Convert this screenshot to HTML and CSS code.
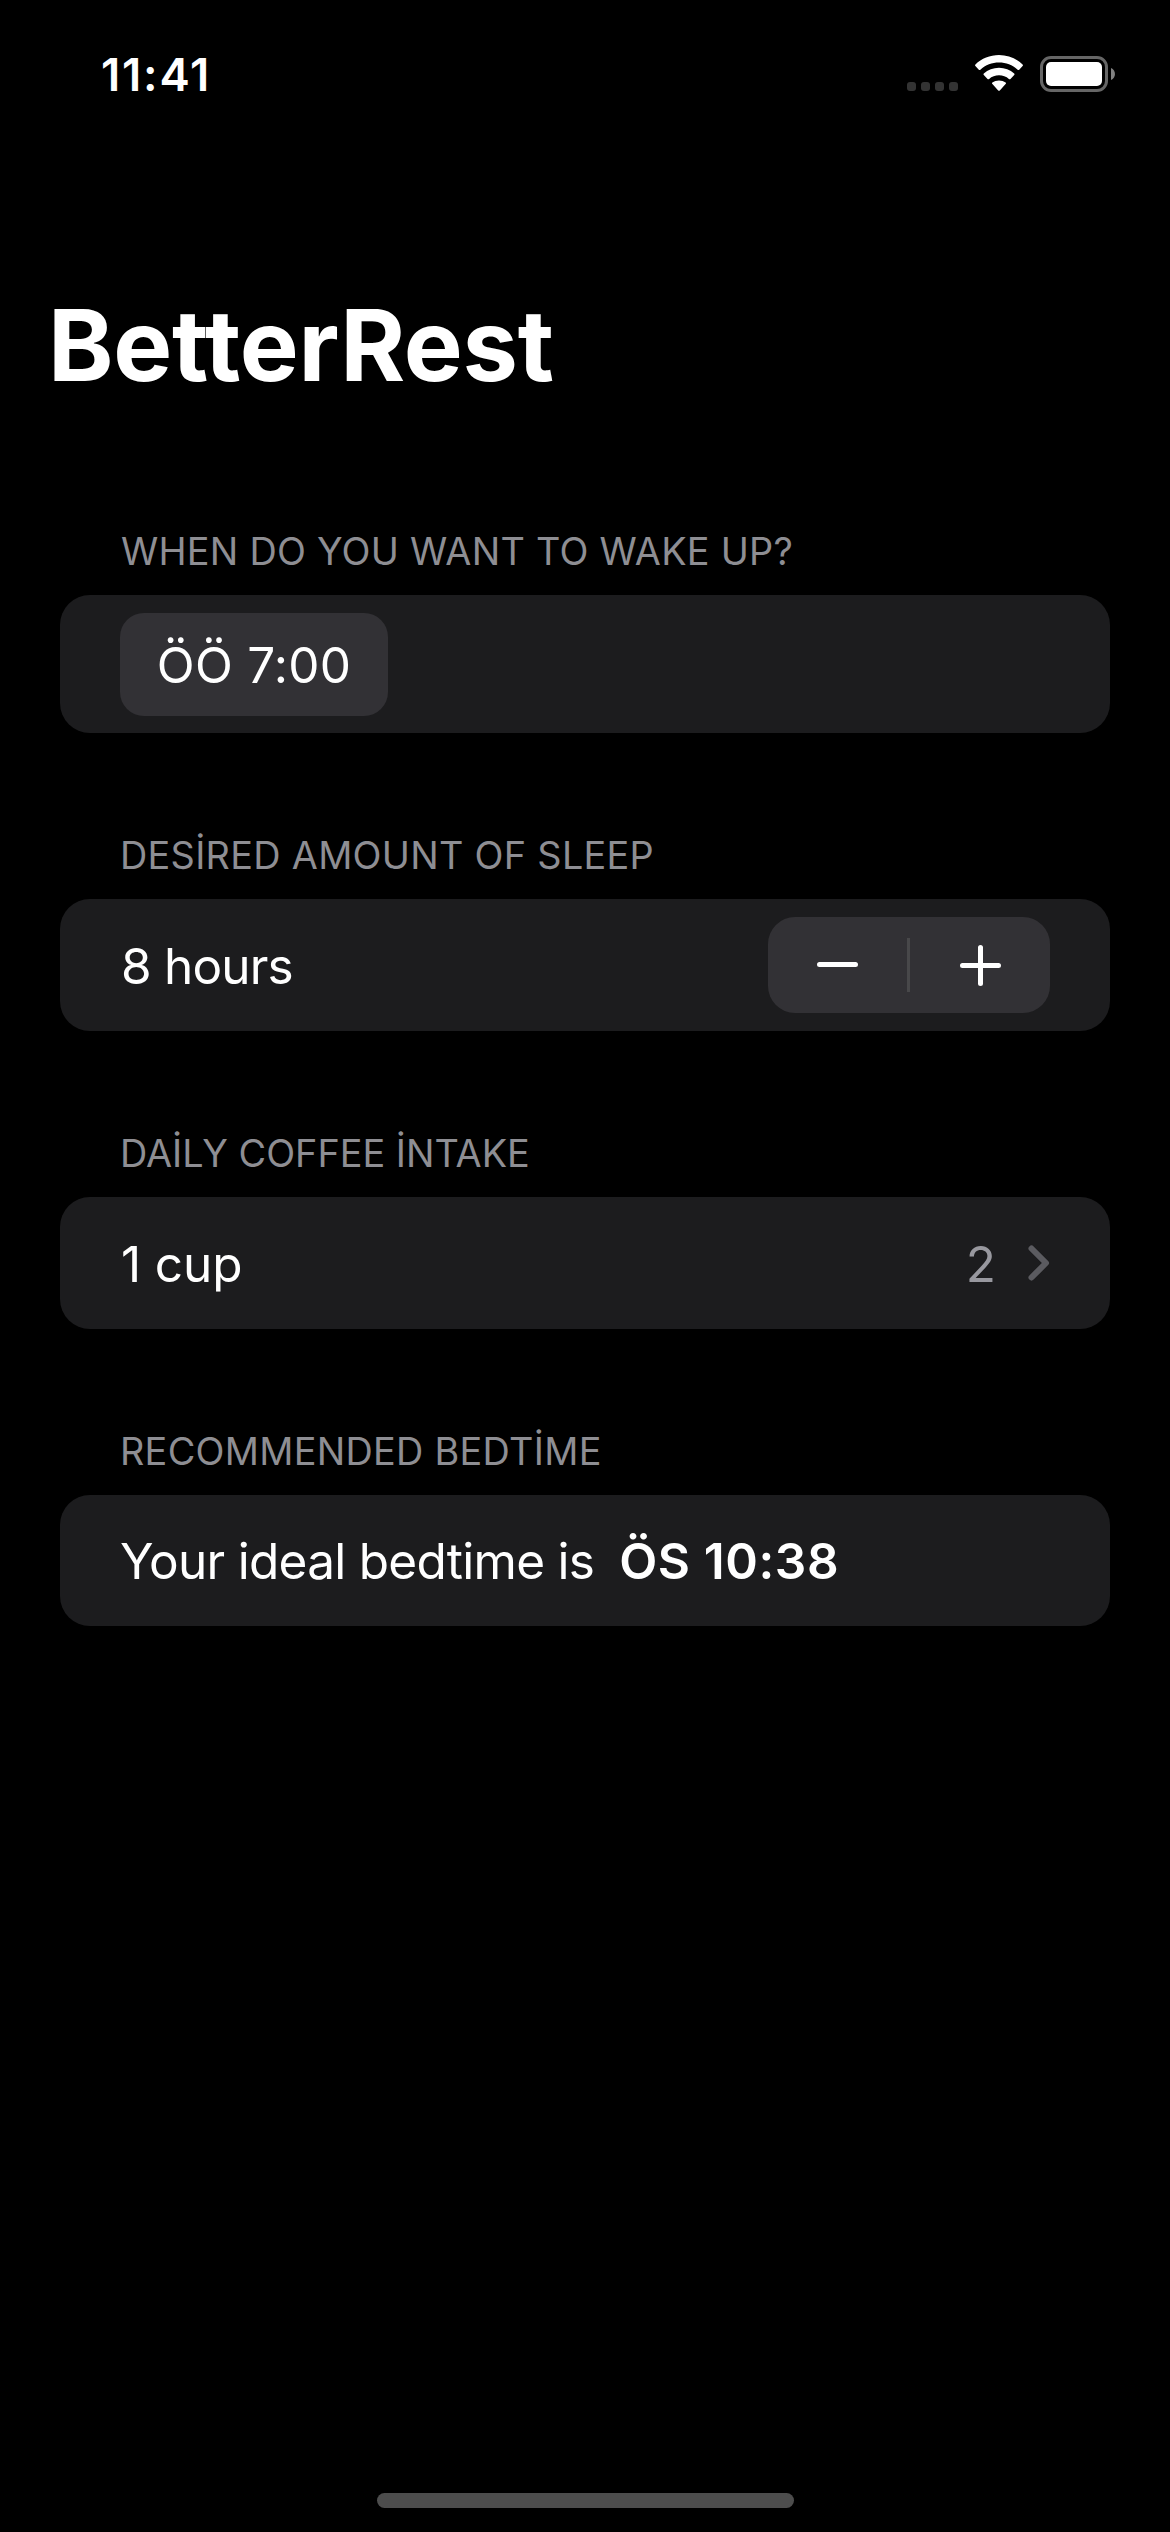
FILE: index.html
```html
<!DOCTYPE html>
<html lang="en">
<head>
<meta charset="utf-8">
<title>BetterRest</title>
<link rel="stylesheet" href="styles.css">
</head>
<body>
<div class="screen">
  <header class="status">
    <span class="time">11:41</span>
    <div class="indicators">
      <svg class="signal" width="51" height="9" viewBox="0 0 51 9"><g fill="#333"><rect width="9" height="9" rx="3"/><rect x="14" width="9" height="9" rx="3"/><rect x="28" width="9" height="9" rx="3"/><rect x="42" width="9" height="9" rx="3"/></g></svg>
      <svg class="wifi" width="48" height="36" viewBox="0 0 48 36"><g fill="#fff"><path d="M24 0C33 0 41.500 3.500 47.600 9.400Q48.300 10.200 47.600 11L44.200 14.700Q43.400 15.500 42.600 14.700C37.500 10 31 7.500 24 7.500S10.500 10 5.400 14.700Q4.600 15.500 3.800 14.700L.4 11Q-.3 10.200 .4 9.400C6.500 3.500 15 0 24 0Z"/><path d="M24 12.700C29.800 12.700 35.100 14.800 39.200 18.400Q40 19.200 39.200 20L35.500 23.900Q34.700 24.700 33.900 24C31.200 21.600 27.700 20.300 24 20.300S16.800 21.600 14.100 24Q13.300 24.700 12.500 23.900L8.800 20Q8 19.200 8.800 18.400C12.900 14.800 18.200 12.700 24 12.700Z"/><path d="M24 25.500C26.500 25.500 28.800 26.300 30.600 27.600Q31.400 28.300 30.600 29.100L24.800 35.400Q24 36.200 23.200 35.400L17.400 29.100Q16.600 28.300 17.400 27.600C19.200 26.300 21.500 25.500 24 25.500Z"/></g></svg>
      <svg class="battery" width="75" height="36" viewBox="0 0 75 36"><rect x="1.500" y="1.500" width="65" height="33" rx="9.500" fill="none" stroke="#666" stroke-width="3"/><rect x="6" y="6" width="56" height="24" rx="5" fill="#fff"/><path d="M71 12C76.300 14 76.300 22 71 24Z" fill="#808080"/></svg>
    </div>
  </header>
  <main class="content">
    <h1 class="title">BetterRest</h1>
    <section class="section">
      <h2 class="label label-wake">WHEN DO YOU WANT TO WAKE UP?</h2>
      <div class="card card-picker"><div class="pill"><span class="wake-time">ÖÖ 7:00</span></div></div>
    </section>
    <section class="section">
      <h2 class="label">DESİRED AMOUNT OF SLEEP</h2>
      <div class="card"><span class="hours">8 hours</span>
        <div class="stepper">
          <svg width="282" height="96" viewBox="0 0 282 96"><path d="M139 21H142V75H139Z" fill="#48484a"/><path d="M51.500 47.500H87.500M194.500 48.500H230.500M212.500 30.500V66.500" stroke="#fff" stroke-width="5" stroke-linecap="round"/></svg>
        </div>
      </div>
    </section>
    <section class="section">
      <h2 class="label label-coffee">DAİLY COFFEE İNTAKE</h2>
      <div class="card"><span class="cup">1 cup</span>
        <div class="detail"><span class="value">2</span><svg width="22" height="36" viewBox="0 0 22 36"><path d="M3.500 3.500L18 18L3.500 32.500" fill="none" stroke="#5b5b60" stroke-width="6" stroke-linecap="round" stroke-linejoin="round"/></svg></div>
      </div>
    </section>
    <section class="section">
      <h2 class="label">RECOMMENDED BEDTİME</h2>
      <div class="card card-result"><span class="ideal">Your ideal bedtime is</span><strong class="bed">ÖS 10:38</strong></div>
    </section>
  </main>
  <div class="home"></div>
</div>
</body>
</html>
```
FILE: styles.css
```css
* { box-sizing: border-box; margin: 0; padding: 0; }
body { background: #000; color: #fff; font-family: Inter, "Liberation Sans", sans-serif; }
svg { display: block; }
.screen { width: 1170px; height: 2532px; display: flex; flex-direction: column; background: #000; }
.status { height: 141px; padding: 47px 55px 0 101px; display: flex; justify-content: space-between; align-items: flex-start; }
.time { font-size: 45.5px; line-height: 55px; font-weight: 600; letter-spacing: 1.8px; }
.indicators { display: flex; padding-top: 8px; }
.signal { margin: 27px 17px 0 0; }
.wifi { margin-right: 17px; }
.battery { margin-top: 1px; }
.content { flex: 1; }
.title { height: 120px; margin: 144px 0 112px; padding-left: 48px; font-size: 99px; line-height: 120px; font-weight: 700; letter-spacing: -.2px; }
.section { padding: 0 60px; margin-bottom: 88px; }
.label { height: 78px; padding-left: 60px; font-size: 37.8px; line-height: 68px; font-weight: 400; letter-spacing: .3px; color: #8e8e93; white-space: nowrap; }
.label-wake { padding-left: 61px; letter-spacing: .25px; }
.label-coffee { letter-spacing: 0; }
.card { height: 132px; padding: 0 60px; border-radius: 30px; background: #1c1c1e; display: flex; align-items: center; justify-content: space-between; font-size: 49.5px; line-height: 60px; white-space: nowrap; }
.card-picker { height: 138px; }
.card-result { height: 131px; justify-content: flex-start; gap: 25px; }
.pill { width: 268px; height: 103px; border-radius: 24px; background: #323135; display: flex; align-items: center; justify-content: center; }
.wake-time { padding-top: 1px; letter-spacing: .25px; }
.hours { padding: 2px 0 0 1px; letter-spacing: -.8px; }
.cup { padding: 2px 0 0 1px; letter-spacing: -.1px; }
.value { padding-top: 2px; }
.stepper { width: 282px; height: 96px; border-radius: 27px; background: #323135; }
.detail { display: flex; align-items: center; gap: 32px; color: #98989f; }
.ideal { padding-top: 1px; letter-spacing: -.72px; }
.bed { padding-top: 1px; font-weight: 600; letter-spacing: .6px; }
.home { width: 417px; height: 15px; margin: 0 auto 24px; border-radius: 8px; background: #4d4d4d; }
```
